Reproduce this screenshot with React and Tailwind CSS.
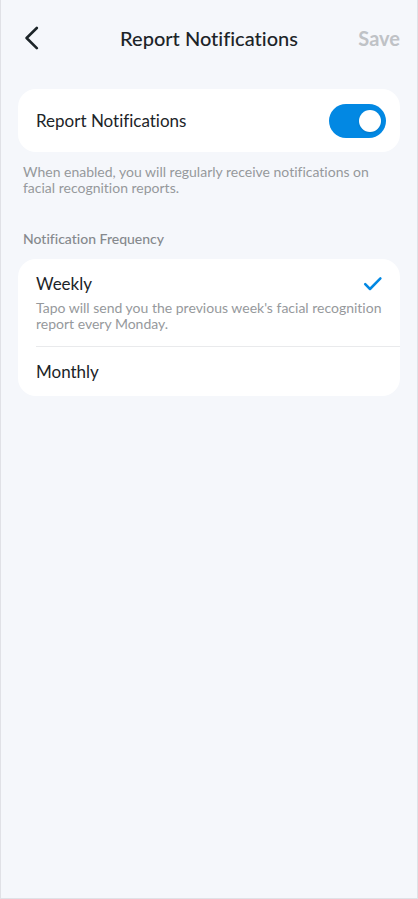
import { useState } from "react";

const OPTIONS = [
  {
    id: "weekly",
    label: "Weekly",
    detail: "Tapo will send you the previous week's facial recognition report every Monday.",
  },
  { id: "monthly", label: "Monthly" },
];

function BackIcon() {
  return (
    <svg className="h-6 w-4" viewBox="0 0 16 24" fill="none" stroke="currentColor" strokeWidth="2.6" strokeLinecap="round" strokeLinejoin="round" aria-hidden="true">
      <path d="M12.8 2 2.6 12l10.2 10.2" />
    </svg>
  );
}

function CheckIcon() {
  return (
    <svg className="h-4 w-5" viewBox="0 0 20 16" fill="none" stroke="currentColor" strokeWidth="2.5" strokeLinecap="round" strokeLinejoin="round" aria-hidden="true">
      <path d="M2.2 8.2 7 13 17.4 2.4" />
    </svg>
  );
}

export default function App() {
  const [enabled, setEnabled] = useState(true);
  const [frequency, setFrequency] = useState("weekly");

  return (
    <div className="min-h-screen border-x border-b border-[#e0e1e6] bg-[#f5f7fb] px-[17px] font-['Lato','Open_Sans',sans-serif] text-[#1c2428] [font-variant-ligatures:none]">
      <header className="grid h-[75px] grid-cols-[1fr_auto_1fr] items-center">
        <button type="button" aria-label="Back" className="justify-self-start px-1.5">
          <BackIcon />
        </button>
        <h1 className="text-[20px] leading-6 font-medium">Report Notifications</h1>
        <button type="button" disabled className="justify-self-end text-[20px] leading-6 font-bold text-[#bfc2c6]">
          Save
        </button>
      </header>

      <main className="pt-3.5">
        <label className="flex h-[63px] items-center justify-between rounded-[18px] bg-white pr-3.5 pl-[18px]">
          <span className="text-[17px] leading-6">Report Notifications</span>
          <input
            type="checkbox"
            role="switch"
            checked={enabled}
            onChange={(e) => setEnabled(e.target.checked)}
            className="flex h-[34px] w-[57px] cursor-pointer appearance-none items-center rounded-full bg-[#c9ccd1] px-[5px] before:size-[22px] before:rounded-full before:bg-white before:shadow-sm before:content-[''] checked:justify-end checked:bg-[#0288e3]"
          />
        </label>
        <p className="mt-3 px-[5px] text-[14px] leading-4 text-[#96999c]">
          When enabled, you will regularly receive notifications on facial recognition reports.
        </p>

        <fieldset className="mt-[35px]">
          <legend className="px-[5px] text-[14px] leading-4 font-medium text-[#85898d]">Notification Frequency</legend>
          <div className="mt-3 rounded-[18px] bg-white pl-[18px]">
            {OPTIONS.map((option) => (
              <label key={option.id} className="block cursor-pointer border-t border-[#e9eaec] pt-[13px] pr-[17px] pb-3.5 first:border-0 last:pb-3">
                <input
                  type="radio"
                  name="frequency"
                  value={option.id}
                  checked={frequency === option.id}
                  onChange={() => setFrequency(option.id)}
                  className="sr-only"
                />
                <span className="flex items-center justify-between">
                  <span className="text-[17px] leading-6">{option.label}</span>
                  <span className="text-[#0288e3]">{frequency === option.id && <CheckIcon />}</span>
                </span>
                {option.detail && (
                  <span className="mt-1 block text-[14px] leading-4 text-[#96999c]">{option.detail}</span>
                )}
              </label>
            ))}
          </div>
        </fieldset>
      </main>
    </div>
  );
}
